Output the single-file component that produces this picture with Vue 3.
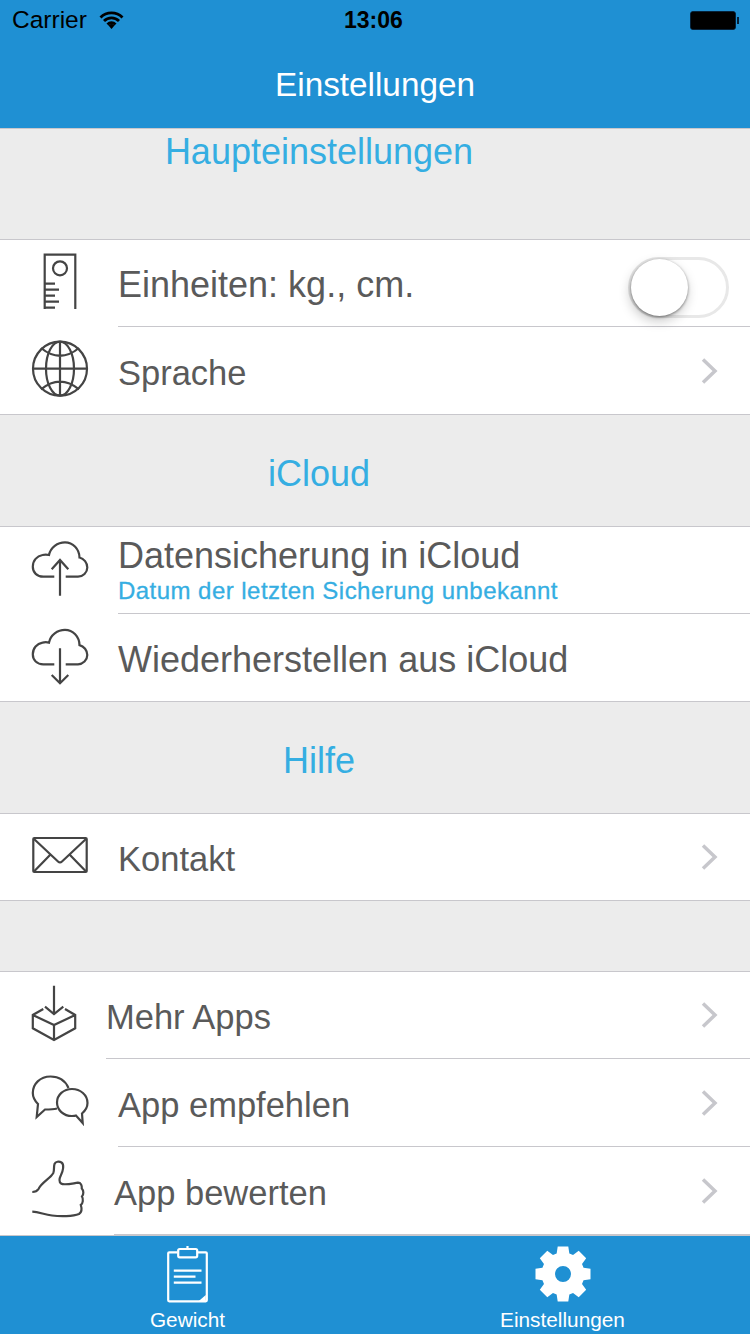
<template>
  <div class="screen">
    <header class="nav">
      <div class="status">
        <span class="carrier">Carrier</span>
        <svg class="wifi" width="25" height="18" viewBox="0 0 25 18">
          <path d="M1.500 6.500a15.500 15.500 0 0 1 22 0M5 10a10.500 10.500 0 0 1 15 0M8.500 13.500a5.500 5.500 0 0 1 8 0" fill="none" stroke="#000" stroke-width="2.800" />
          <path d="M12.500 18l-3-3.600a4 4 0 0 1 6 0z" fill="#000" />
        </svg>
        <span class="clock">13:06</span>
        <span class="battery"><i></i></span>
      </div>
      <h1 class="nav-title">Einstellungen</h1>
    </header>

    <main class="list">
      <div class="section-head first"><span>Haupteinstellungen</span></div>
      <section class="group">
        <div class="row">
          <svg class="icon w56" height="86" viewBox="0 0 56 86">
            <path d="M12.700 69V14.700H43.300V69" />
            <circle cx="28" cy="28.300" r="7" />
            <path d="M12.700 43.700H23M12.700 49.700H27M12.700 55.700H23M12.700 61.700H27M12.700 67.700H23" />
          </svg>
          <div class="body">
            <span class="label big">Einheiten: kg., cm.</span>
            <span class="toggle"><i></i></span>
          </div>
        </div>
        <div class="row">
          <svg class="icon w56" height="86" viewBox="0 0 56 86">
            <circle cx="28" cy="41.700" r="27" />
            <ellipse cx="28" cy="41.700" rx="14" ry="27" />
            <path d="M28 14.700V68.700M1 41.700H55M9 21Q28 36.500 47 21M9 62.400Q28 46.900 47 62.400" />
          </svg>
          <div class="body">
            <span class="label">Sprache</span>
            <svg class="chevron" width="20" height="30" viewBox="0 0 20 30"><path d="M3 3.500L15 15L3 26.500" /></svg>
          </div>
        </div>
      </section>

      <div class="section-head"><span>iCloud</span></div>
      <section class="group">
        <div class="row">
          <svg class="icon w56" height="86" viewBox="0 0 56 86">
            <path d="M22.300 49.700H11.300C5 49.700 .8 45.500 .8 39.700C.8 33.500 5 29 10.500 28C12.500 27.500 15 27.500 17 28C18.500 20.500 25.500 15.300 33 15.300C41 15.300 47.300 22 47.500 30.500C52 31.500 55.300 36 55.300 40.500C55.300 45.500 51 49.700 46 49.700H33.700" />
            <path d="M28 68.700V33M19.700 42.300L28 33L36.300 42.300" />
          </svg>
          <div class="body column">
            <span class="label big">Datensicherung in iCloud</span>
            <span class="sub">Datum der letzten Sicherung unbekannt</span>
          </div>
        </div>
        <div class="row">
          <svg class="icon w56" height="86" viewBox="0 0 56 86">
            <path d="M22.300 50.300H11.300C5 50.300 .8 46.100 .8 40.300C.8 34.100 5 29.600 10.500 28.600C12.500 28.100 15 28.100 17 28.600C18.500 21.100 25.500 15.900 33 15.900C41 15.900 47.300 22.600 47.500 31.100C52 32.100 55.300 36.600 55.300 41.100C55.300 46.100 51 50.300 46 50.300H33.700" />
            <path d="M28 34.300V69.300M19.700 61L28 69.300L36.300 61" />
          </svg>
          <div class="body">
            <span class="label big">Wiederherstellen aus iCloud</span>
          </div>
        </div>
      </section>

      <div class="section-head"><span>Hilfe</span></div>
      <section class="group">
        <div class="row">
          <svg class="icon w56" height="86" viewBox="0 0 56 86">
            <rect x="1.300" y="24" width="53.400" height="34" rx="1" />
            <path d="M1.500 24.500L26 47.500Q28 49.300 30 47.500L54.500 24.500M1.500 58L18 41M54.500 58L38 41" />
          </svg>
          <div class="body">
            <span class="label">Kontakt</span>
            <svg class="chevron" width="20" height="30" viewBox="0 0 20 30"><path d="M3 3.500L15 15L3 26.500" /></svg>
          </div>
        </div>
      </section>

      <div class="spacer"></div>
      <section class="group plain">
        <div class="row">
          <svg class="icon w44" height="86" viewBox="0 0 44 86">
            <path d="M22 13.700V42M13 34.700L22 42L31.300 34.700" />
            <path d="M11.300 37L.8 43V56.300L22 68L43.200 56.300V43L33 37M.8 43L22 53L43.200 43M22 53V68" />
          </svg>
          <div class="body">
            <span class="label">Mehr Apps</span>
            <svg class="chevron" width="20" height="30" viewBox="0 0 20 30"><path d="M3 3.500L15 15L3 26.500" /></svg>
          </div>
        </div>
        <div class="row">
          <svg class="icon w56" height="86" viewBox="0 0 56 86">
            <path d="M36.500 29C33.500 22 27 17.500 18.500 17.500C8 17.500 .8 25 .8 34C.8 38 2.500 41.500 6 45L4.700 58L13 50.500C17 50.500 21 50.500 25 49.500" />
            <path d="M50.700 64L50 54.500C53.500 51.500 55.500 48 55.500 44C55.500 36 48.500 30 40 30C31.500 30 25 36 25 43.500C25 51 31.500 57 40 57C41.500 57 43 57 44 56.500L50.700 64Z" />
          </svg>
          <div class="body">
            <span class="label">App empfehlen</span>
            <svg class="chevron" width="20" height="30" viewBox="0 0 20 30"><path d="M3 3.500L15 15L3 26.500" /></svg>
          </div>
        </div>
        <div class="row">
          <svg class="icon w52" height="86" viewBox="0 0 52 86">
            <path d="M.3 45C3 45 5 44.500 6.500 42C10 35 18 32 21.300 26C22.500 23.500 21.500 20 22.500 17C23.500 14.500 27 14 29.500 15.500C32.500 17.500 31 24 29 28C27.500 31 26.500 34.500 29 36.500C32 38.500 40 36.500 46 35.700C49 35.700 50 38.500 49.800 41.500C51.800 43.500 51.800 47.500 50 49.500C51.500 52 51 56.500 48.800 58C49.800 61 50 65 47 67C41 69.500 28 69.500 20 68.500C12 67.500 7 65 .3 64.700" />
          </svg>
          <div class="body">
            <span class="label">App bewerten</span>
            <svg class="chevron" width="20" height="30" viewBox="0 0 20 30"><path d="M3 3.500L15 15L3 26.500" /></svg>
          </div>
        </div>
      </section>
    </main>

    <footer class="tabs">
      <div class="tab">
        <svg width="44" height="58" viewBox="0 0 44 58">
          <path d="M11.500 6.300H3.200Q2.200 6.300 2.200 7.300V54.300Q2.200 55.300 3.200 55.300H39.800Q40.800 55.300 40.800 54.300V7.300Q40.800 6.300 39.800 6.300H31.500" fill="none" stroke="#fff" stroke-width="2.200" />
          <rect x="12.200" y="3" width="19" height="8.300" rx="1.500" fill="none" stroke="#fff" stroke-width="2.200" />
          <path d="M21.500 0V3M7.800 24.700H35.500M7.800 30.700H29.500M7.800 36.700H35.500" fill="none" stroke="#fff" stroke-width="2.200" />
          <path d="M39.800 49L32.800 55H39.800Z" fill="#fff" />
        </svg>
        <span>Gewicht</span>
      </div>
      <div class="tab">
        <svg width="58" height="58" viewBox="-29 -28 58 58">
          <path :d="gearPath" fill="#fff" fill-rule="evenodd" />
        </svg>
        <span>Einstellungen</span>
      </div>
    </footer>
  </div>
</template>

<script setup>
// gear for the tab bar, 8 teeth with a round hole
const buildGear = () => {
  const pts = [];
  for (let i = 0; i < 8; i++) {
    const a = -Math.PI / 2 + (i * Math.PI) / 4;
    const steps = [[21.5, -0.3], [28, -0.19], [28, 0.19], [21.5, 0.3]];
    steps.forEach(([r, d]) => {
      pts.push((r * Math.cos(a + d)).toFixed(2) + ' ' + (r * Math.sin(a + d)).toFixed(2));
    });
  }
  const hole = 'M8 0A8 8 0 1 0 -8 0A8 8 0 1 0 8 0Z';
  return 'M' + pts.join('L') + 'Z' + hole;
};

const gearPath = buildGear();
</script>

<style scoped>
.screen {
  width: 750px;
  height: 1334px;
  display: flex;
  flex-direction: column;
  overflow: hidden;
  background: #ececec;
  font-family: "Liberation Sans", Arial, sans-serif;
}

.nav {
  height: 128px;
  background: #1f90d3;
  flex: none;
}

.status {
  height: 40px;
  display: flex;
  align-items: center;
  position: relative;
  padding-left: 12px;
  color: #000;
  font-size: 24.500px;
}

.carrier {
  width: 75px;
  white-space: nowrap;
}

.wifi {
  margin-left: 12px;
}

.clock {
  position: absolute;
  left: 344px;
  font-size: 23px;
  font-weight: 700;
}

.battery {
  position: absolute;
  left: 690px;
  top: 11px;
  width: 46px;
  height: 19px;
  box-sizing: border-box;
  border: 1px solid #06223a;
  border-radius: 3px;
  background: #000;
}

.battery i {
  display: block;
  height: 100%;
  background: #000;
  border-radius: 2px;
}

.battery::after {
  content: "";
  position: absolute;
  right: -4px;
  top: 5px;
  width: 2px;
  height: 7px;
  background: #06223a;
}

.nav-title {
  margin: 0;
  padding-top: 25px;
  text-align: center;
  color: #fff;
  font-size: 33.300px;
  line-height: 40px;
  font-weight: 400;
}

.list {
  flex: 1;
}

.section-head {
  height: 111px;
  box-sizing: border-box;
  padding: 39px 112px 0 0;
  text-align: center;
  color: #35aee2;
  font-size: 36px;
  line-height: 40px;
}

.section-head.first {
  border-top: 1px solid #c8c7cc;
  padding-top: 3px;
}

.spacer {
  height: 70px;
}

.group {
  background: #fff;
  border-top: 1px solid #c8c7cc;
  border-bottom: 1px solid #c8c7cc;
}

.group.plain {
  border-bottom: none;
}

.row {
  height: 87px;
  display: flex;
  box-sizing: border-box;
}

.row:only-child {
  height: 86px;
}

.row + .row {
  height: 88px;
}

.group:not(.plain) .row + .row {
  height: 87px;
}

.icon {
  flex: none;
  margin: 0 30px 0 32px;
  fill: none;
  stroke: #444;
  stroke-width: 2.200;
  overflow: visible;
}

.w56 { width: 56px; }
.w52 { width: 52px; }
.w44 { width: 44px; }

.body {
  flex: 1;
  display: flex;
  align-items: center;
  justify-content: space-between;
  border-bottom: 1px solid #c8c7cc;
}

.group:not(.plain) .row:last-child .body {
  border-bottom: none;
}

.body.column {
  flex-direction: column;
  align-items: flex-start;
  justify-content: flex-start;
  padding-top: 9px;
}

.label {
  color: #5a5a5a;
  font-size: 34.500px;
  line-height: 40px;
  position: relative;
  top: 2px;
}

.label.big {
  font-size: 36px;
}

.column .label {
  top: 0;
}

.sub {
  color: #35aee2;
  font-size: 24px;
  letter-spacing: 0.46px;
  line-height: 30px;
  -webkit-text-stroke: 0.3px #35aee2;
}

.chevron {
  margin-right: 30px;
  fill: none;
  stroke: #c7c7cc;
  stroke-width: 3.500;
}

.toggle {
  position: relative;
  width: 101px;
  height: 61px;
  box-sizing: border-box;
  margin: 8px 21px 0 0;
  border: 3px solid #e8e8e8;
  border-radius: 31px;
  background: #fff;
}

.toggle i {
  position: absolute;
  left: 0;
  top: -1px;
  width: 57px;
  height: 57px;
  border-radius: 50%;
  background: #fff;
  box-shadow: -1px 5px 12px rgba(0, 0, 0, 0.22), 0 1px 3px rgba(0, 0, 0, 0.45);
}

.tabs {
  flex: none;
  height: 99px;
  box-sizing: border-box;
  border-top: 1px solid #c8c7cc;
  background: #1f90d3;
  display: flex;
}

.tab {
  flex: 1;
  display: flex;
  flex-direction: column;
  align-items: center;
  padding-top: 10px;
  color: #fff;
  font-size: 20.800px;
  line-height: 24px;
}

.tab svg {
  display: block;
  margin-bottom: 4px;
}
</style>
